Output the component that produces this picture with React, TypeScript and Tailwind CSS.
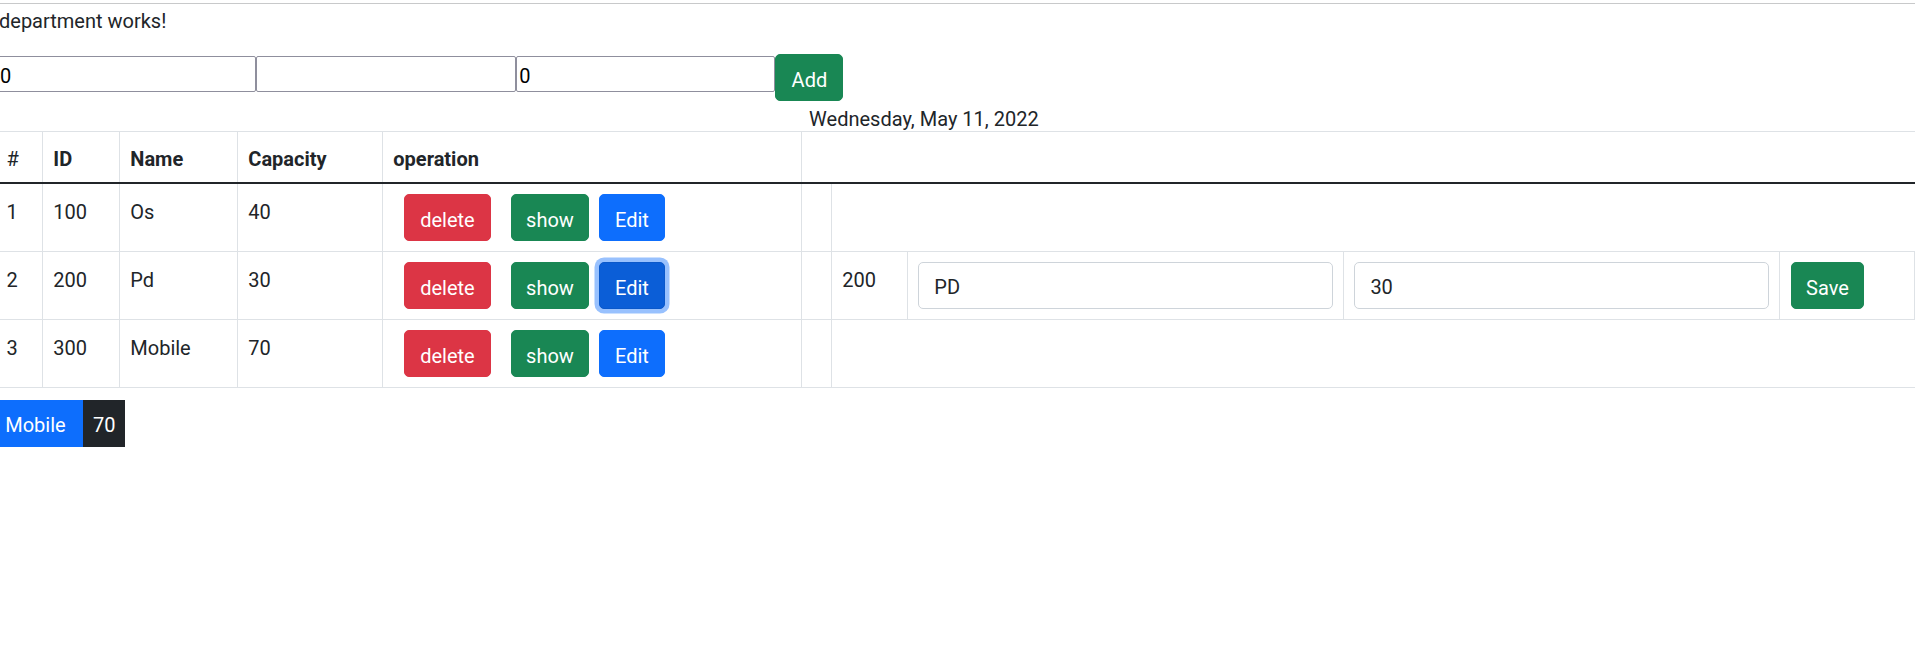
import React from "react";

type Row = { n: number; id: number; name: string; cap: number; editing?: boolean };

const rows: Row[] = [
  { n: 1, id: 100, name: "Os", cap: 40 },
  { n: 2, id: 200, name: "Pd", cap: 30, editing: true },
  { n: 3, id: 300, name: "Mobile", cap: 70 },
];

function BodyRow({ r }: { r: Row }) {
  return (
    <div className="flex h-[68px] border-b border-[#dee2e6]">
      <div className="h-full w-[46.7px] shrink-0 border-r border-[#dee2e6] px-[10px] pt-[12.6px]">{r.n}</div>
      <div className="h-full w-[77px] shrink-0 border-r border-[#dee2e6] px-[10px] pt-[12.6px]">{r.id}</div>
      <div className="h-full w-[118px] shrink-0 border-r border-[#dee2e6] px-[10px] pt-[12.6px]">{r.name}</div>
      <div className="h-full w-[145px] shrink-0 border-r border-[#dee2e6] px-[10px] pt-[12.6px]">{r.cap}</div>
      <div className="flex h-full w-[418.3px] shrink-0 items-start border-r border-[#dee2e6] pl-[20.7px] pt-[10px]">
        <button className="h-[47px] w-[87px] rounded-[5px] border border-[#dc3545] bg-[#dc3545] pb-[5.2px] pt-[9.8px] leading-[30px] text-white">
          delete
        </button>
        <button className="ml-[20px] h-[47px] w-[78px] rounded-[5px] border border-[#198754] bg-[#198754] pb-[5.2px] pt-[9.8px] leading-[30px] text-white">
          show
        </button>
        {r.editing ? (
          <button className="ml-[10px] h-[47px] w-[66px] rounded-[5px] border border-[#0a58ca] bg-[#0b5ed7] pb-[5.2px] pt-[9.8px] leading-[30px] text-white shadow-[0_0_0_4.5px_rgba(49,132,253,0.5)]">
            Edit
          </button>
        ) : (
          <button className="ml-[10px] h-[47px] w-[66px] rounded-[5px] border border-[#0d6efd] bg-[#0d6efd] pb-[5.2px] pt-[9.8px] leading-[30px] text-white">
            Edit
          </button>
        )}
      </div>
      <div className="h-full w-[30.7px] shrink-0 border-r border-[#dee2e6]" />
      {r.editing && (
        <>
          <div className="h-full w-[76px] shrink-0 border-r border-[#dee2e6] pl-[10px] pt-[12.6px]">200</div>
          <div className="h-full w-[436.1px] shrink-0 border-r border-[#dee2e6] px-[10px] pt-[10.3px]">
            <input
              readOnly
              value="PD"
              className="h-[46.5px] w-full rounded-[5px] border border-[#ced4da] bg-white px-[15px] pb-[5.7px] pt-[8.8px] leading-[30px] text-[#212529] outline-none"
            />
          </div>
          <div className="h-full w-[435.6px] shrink-0 border-r border-[#dee2e6] px-[10px] pt-[10.3px]">
            <input
              readOnly
              value="30"
              className="h-[46.5px] w-full rounded-[5px] border border-[#ced4da] bg-white px-[15px] pb-[5.7px] pt-[8.8px] leading-[30px] text-[#212529] outline-none"
            />
          </div>
          <div className="h-full w-[135px] shrink-0 border-r border-[#dee2e6] pl-[11px] pt-[10px]">
            <button className="h-[47px] w-[73px] rounded-[5px] border border-[#198754] bg-[#198754] pb-[5.2px] pt-[9.8px] leading-[30px] text-white">
              Save
            </button>
          </div>
        </>
      )}
      <div className="flex-1" />
    </div>
  );
}

export default function App() {
  return (
    <div className="h-[652px] w-[1916px] overflow-hidden bg-white font-['Roboto',sans-serif] text-[20px] leading-[30px] text-[#212529]">
      <div className="ml-[-3.4px] w-[1918.4px]">
        <div className="mt-[2.75px] h-[1.25px] bg-[#c8c9ca]" />
        <p className="mt-[2.1px] h-[30px] pl-[2.4px]">department works!</p>

        <div className="mt-[17.9px] flex h-[47px] items-start">
          <input
            readOnly
            value="0"
            className="mt-[2px] h-[35.7px] w-[259.6px] rounded-[2px] border border-[#8f8f9d] bg-white pb-0 pl-[2.5px] pt-[3.6px] leading-[30px] text-black outline-none"
          />
          <input
            readOnly
            value=""
            className="mt-[2px] h-[35.7px] w-[259.6px] rounded-[2px] border border-[#8f8f9d] bg-white pb-0 pl-[2.5px] pt-[3.6px] leading-[30px] text-black outline-none"
          />
          <input
            readOnly
            value="0"
            className="mt-[2px] h-[35.7px] w-[259.6px] rounded-[2px] border border-[#8f8f9d] bg-white pb-0 pl-[2.5px] pt-[3.6px] leading-[30px] text-black outline-none"
          />
          <button className="h-[47px] w-[68px] rounded-[5px] border border-[#198754] bg-[#198754] pb-[5.2px] pt-[9.8px] leading-[30px] text-white">
            Add
          </button>
        </div>

        <div className="h-[30px] pl-[812.5px] pt-[6.2px] leading-[24px]">Wednesday, May 11, 2022</div>

        <div className="border-t border-[#dee2e6]">
          <div className="flex h-[52px] border-b-[2.5px] border-[#212529] font-bold">
            <div className="h-full w-[46.7px] shrink-0 border-r border-[#dee2e6] px-[10px] pt-[11.6px] font-normal">#</div>
            <div className="h-full w-[77px] shrink-0 border-r border-[#dee2e6] px-[10px] pt-[11.6px]">ID</div>
            <div className="h-full w-[118px] shrink-0 border-r border-[#dee2e6] px-[10px] pt-[11.6px]">Name</div>
            <div className="h-full w-[145px] shrink-0 border-r border-[#dee2e6] px-[10px] pt-[11.6px]">Capacity</div>
            <div className="h-full w-[418.3px] shrink-0 border-r border-[#dee2e6] px-[10px] pt-[11.6px]">operation</div>
            <div className="flex-1" />
          </div>
          {rows.map((r) => (
            <BodyRow key={r.n} r={r} />
          ))}
        </div>

        <div className="mt-[12px] flex h-[46.7px]">
          <span className="w-[86.4px] bg-[#0d6efd] pl-[8.6px] pt-[10.4px] text-white">Mobile</span>
          <span className="w-[42px] bg-[#212529] pl-[10px] pt-[10.4px] text-white">70</span>
        </div>
      </div>
    </div>
  );
}
